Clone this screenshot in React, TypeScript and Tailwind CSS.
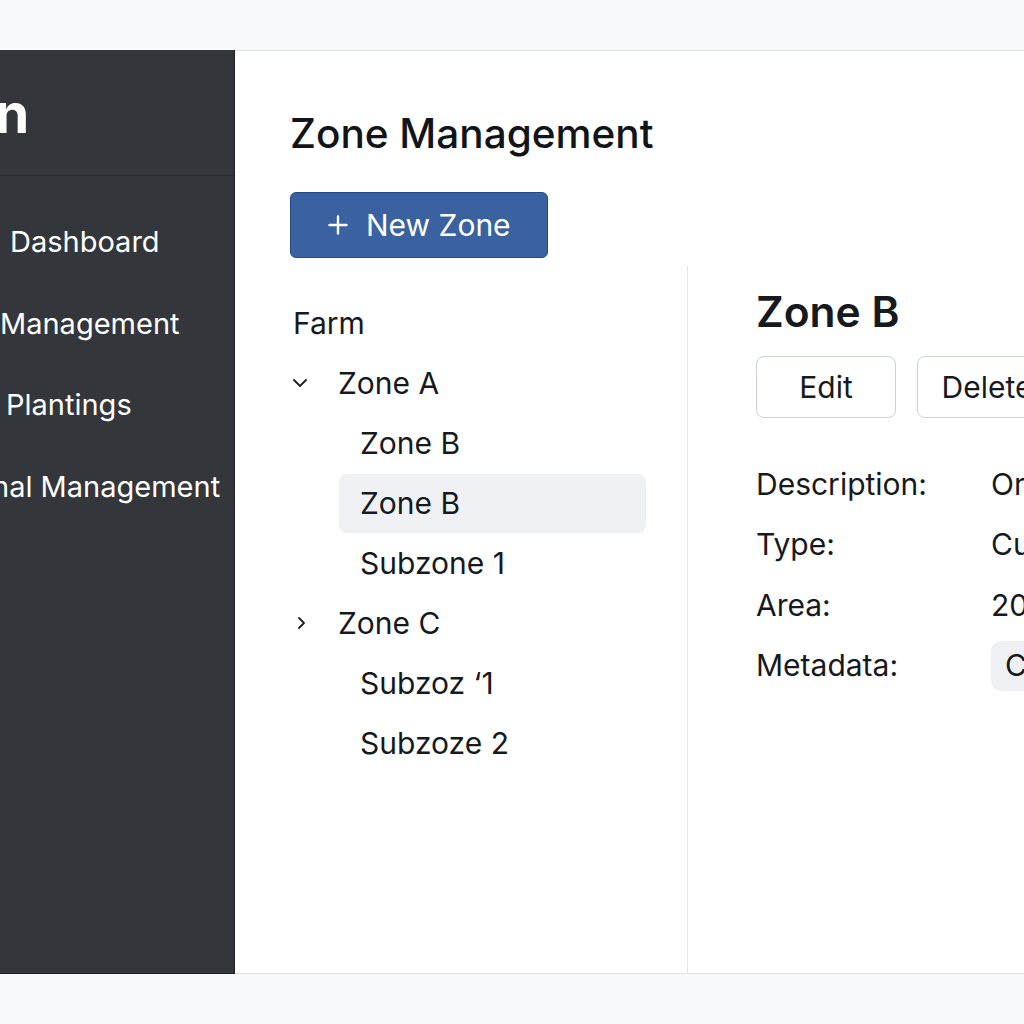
import React from "react";

const font = { fontFamily: "Inter, 'Noto Sans', sans-serif" };

function ChevronDown() {
  return (
    <svg width="16" height="10" viewBox="0 0 16 10" fill="none" stroke="#1b1e22" strokeWidth="1.8" strokeLinecap="round" strokeLinejoin="round">
      <path d="M2 2l6 6 6-6" />
    </svg>
  );
}

function ChevronRight() {
  return (
    <svg width="10" height="14" viewBox="0 0 10 14" fill="none" stroke="#1b1e22" strokeWidth="1.8" strokeLinecap="round" strokeLinejoin="round">
      <path d="M3 2l5 5-5 5" />
    </svg>
  );
}

function Plus() {
  return (
    <svg width="20" height="20" viewBox="0 0 20 20" fill="none" stroke="#ffffff" strokeWidth="2.4" strokeLinecap="round">
      <path d="M10 1.5v17M1.5 10h17" />
    </svg>
  );
}

export default function App() {
  const nav = ["Dashboard", "Management", "Plantings", "nal Management"];
  const navPad = ["pl-[10px]", "pl-0", "pl-[6px]", "-ml-[8px]"];
  return (
    <div className="w-[1024px] h-[1024px] overflow-hidden bg-[#f8f9fb] pt-[50px]" style={font}>
      <div className="flex h-[924px]">
        <aside className="w-[235px] shrink-0 bg-[#33373b] border-r border-b border-[#1c1e20] flex flex-col overflow-hidden">
          <div className="h-[126px] border-b border-[#26292c] flex items-center">
            <span className="text-white text-[55px] font-bold leading-none -ml-[5px] mt-[2px]">n</span>
          </div>
          <nav className="pt-[25px] flex flex-col">
            {nav.map((n, i) => (
              <div key={n} className={`h-[81.5px] flex items-center text-white text-[29px] whitespace-nowrap ${navPad[i]}`}>
                {n}
              </div>
            ))}
          </nav>
        </aside>
        <main className="flex-1 bg-white border-t border-b border-[#e1e5ea] flex flex-col pl-[55px]">
          <h1 className="mt-[60px] text-[40.5px] font-medium leading-[46px] text-[#111418] whitespace-nowrap">Zone Management</h1>
          <div className="mt-[35px]">
            <button className="w-[258px] h-[66px] rounded-[6px] bg-[#3a62a0] border border-[#24498a] text-white text-[30px] flex items-center pl-[37px] gap-[18px]">
              <Plus />
              <span>New Zone</span>
            </button>
          </div>
          <div className="mt-[8px] flex flex-1">
            <div className="w-[398px] shrink-0 border-r border-[#e1e5ea] pt-[27px] text-[30px] text-[#16191d]">
              <div className="h-[60px] flex items-center pl-[3px]">Farm</div>
              <div className="h-[60px] flex items-center">
                <span className="w-[48px] flex items-center pl-[2px]"><ChevronDown /></span>
                <span>Zone A</span>
              </div>
              <div className="h-[60px] flex items-center pl-[70px]">Zone B</div>
              <div className="h-[60px] flex items-center pl-[49px] pr-[41px]">
                <div className="flex-1 h-[59px] rounded-[8px] bg-[#eff1f4] flex items-center pl-[21px]">Zone B</div>
              </div>
              <div className="h-[60px] flex items-center pl-[70px]">Subzone 1</div>
              <div className="h-[60px] flex items-center">
                <span className="w-[48px] flex items-center pl-[6px]"><ChevronRight /></span>
                <span>Zone C</span>
              </div>
              <div className="h-[60px] flex items-center pl-[70px]">Subzoz ‘1</div>
              <div className="h-[60px] flex items-center pl-[70px]">Subzoze 2</div>
            </div>
            <div className="flex-1 pl-[68px] pt-[22px] text-[#16191d] overflow-hidden">
              <h2 className="text-[42.5px] font-semibold leading-[48px] whitespace-nowrap">Zone B</h2>
              <div className="mt-[20px] flex gap-[21px] whitespace-nowrap">
                <button className="w-[140px] h-[62px] shrink-0 rounded-[8px] border border-[#c9d1dc] bg-white text-[30px] flex items-center justify-center">Edit</button>
                <button className="w-[140px] h-[62px] shrink-0 rounded-[8px] border border-[#c9d1dc] bg-white text-[30px] flex items-center justify-center">Delete</button>
              </div>
              <div className="mt-[36px] text-[30px] whitespace-nowrap">
                {[
                  ["Description:", "Orchard"],
                  ["Type:", "Cultivation"],
                  ["Area:", "2000 m²"],
                ].map(([k, v]) => (
                  <div key={k} className="h-[60.5px] flex items-center">
                    <span className="w-[235px] shrink-0">{k}</span>
                    <span>{v}</span>
                  </div>
                ))}
                <div className="h-[60.5px] flex items-center">
                  <span className="w-[235px] shrink-0">Metadata:</span>
                  <span className="h-[50px] px-[14px] rounded-[10px] bg-[#eef0f3] flex items-center">Crop</span>
                </div>
              </div>
            </div>
          </div>
        </main>
      </div>
    </div>
  );
}
